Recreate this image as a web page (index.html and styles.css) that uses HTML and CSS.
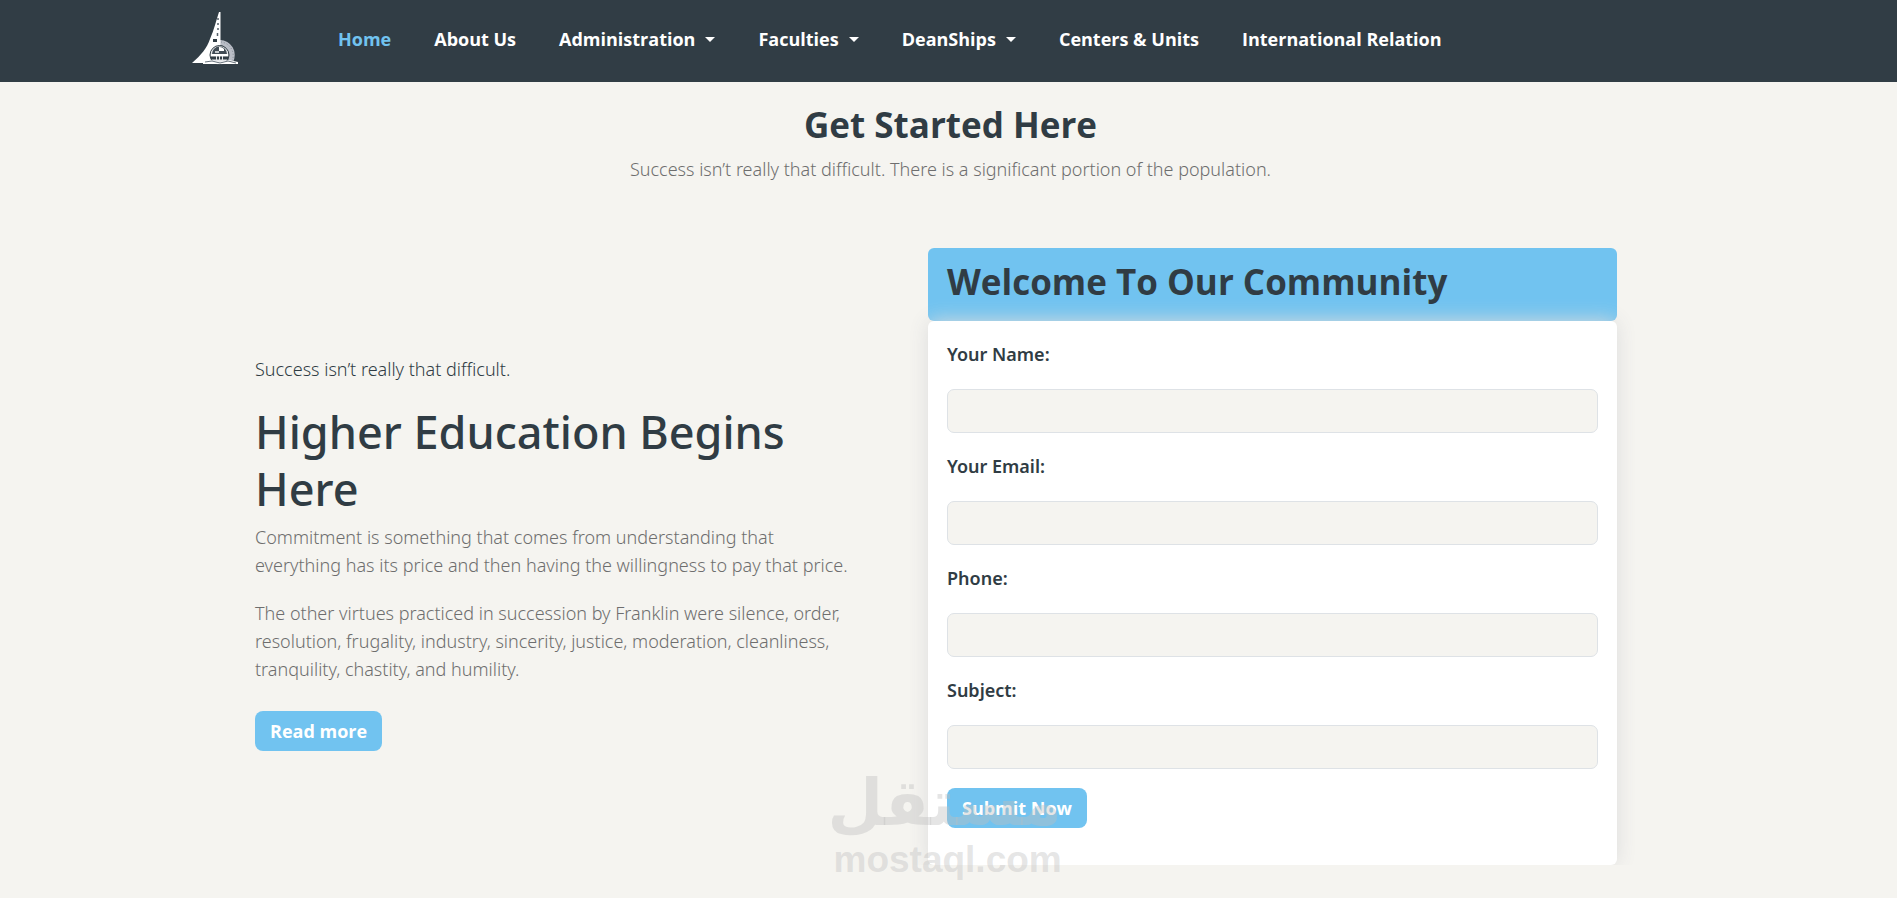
FILE: index.html
```html
<!DOCTYPE html>
<html lang="en">
<head>
  <meta charset="utf-8">
  <meta name="viewport" content="width=device-width, initial-scale=1">
  <title>Get Started Here</title>
  <link rel="stylesheet" href="styles.css">
</head>
<body>

  <nav class="navbar">
    <a class="brand" href="#" aria-label="University home">
      <svg width="47" height="54" viewBox="0 0 47 54">
        <!-- protractor -->
        <path d="M28 28a15 15 0 0 1 13 22h-6a11 11 0 0 0-7-17z" fill="#b9bdc6"/>
        <path d="M29 30a13.500 13.500 0 0 1 11 19" fill="none" stroke="#7d8790" stroke-width="1" stroke-dasharray="1 2"/>
        <!-- tower -->
        <path d="M27 0h1.500v30l-1 21H0C9 43 15 36 18 27C22 18 24 9 27 0z" fill="#fff"/>
        <path d="M26 6v2M26 11v2M26 16v2M25.500 21v3" stroke="#55606a" stroke-width="1.500"/>
        <path d="M21 27h4v3h-4z" fill="#313d45"/>
        <!-- dome and gate -->
        <circle cx="27.500" cy="43" r="9.500" fill="#e4e6e9" stroke="#313d45" stroke-width="1"/>
        <path d="M20 42a7.500 7.500 0 0 1 15 0z" fill="#414c55"/>
        <path d="M27 35v4h5v-2a6 6 0 0 0-5-2z" fill="#fff"/>
        <path d="M23 39h4v2h-4z" fill="#c3c8cd"/>
        <path d="M19 43h17" stroke="#fff" stroke-width="2"/>
        <path d="M19 46h5M25 46h2M28 46h2M31 46h5" stroke="#313d45" stroke-width="3"/>
        <path d="M11 50l8-2 9 2 9-2 9 2v2H11z" fill="#fff"/>
        <path d="M13 50l7-1 8 2 8-2 8 2" fill="none" stroke="#68737c" stroke-width="1"/>
      </svg>
    </a>
    <ul class="nav-links">
      <li><a class="active" href="#">Home</a></li>
      <li><a href="#">About Us</a></li>
      <li><a class="dropdown" href="#">Administration</a></li>
      <li><a class="dropdown" href="#">Faculties</a></li>
      <li><a class="dropdown" href="#">DeanShips</a></li>
      <li><a href="#">Centers &amp; Units</a></li>
      <li><a href="#">International Relation</a></li>
    </ul>
  </nav>

  <header class="section-title">
    <h2>Get Started Here</h2>
    <p>Success isn’t really that difficult. There is a significant portion of the population.</p>
  </header>

  <main class="started">
    <section class="intro">
      <p class="lead">Success isn’t really that difficult.</p>
      <h1>Higher Education Begins Here</h1>
      <p>Commitment is something that comes from understanding that everything has its price and then having the willingness to pay that price.</p>
      <p>The other virtues practiced in succession by Franklin were silence, order, resolution, frugality, industry, sincerity, justice, moderation, cleanliness, tranquility, chastity, and humility.</p>
      <button class="btn" type="button">Read more</button>
    </section>

    <section class="community">
      <h2>Welcome To Our Community</h2>
      <form class="card">
        <label for="name">Your Name:</label>
        <input id="name" type="text" name="name">
        <label for="email">Your Email:</label>
        <input id="email" type="email" name="email">
        <label for="phone">Phone:</label>
        <input id="phone" type="tel" name="phone">
        <label for="subject">Subject:</label>
        <input id="subject" type="text" name="subject">
        <button class="btn" type="submit">Submit Now</button>
      </form>
    </section>
  </main>

  <div class="watermark">
    <span class="watermark-ar" lang="ar" dir="rtl">مستقل</span>
    <span class="watermark-en">mostaql.com</span>
  </div>

</body>
</html>
```
FILE: styles.css
```css
* {
  box-sizing: border-box;
}
body {
  margin: 0;
  background: #f5f4f0;
  color: #303c44;
  font-family: "Noto Sans", sans-serif;
  font-size: 18px;
  line-height: 28px;
}
h1, h2, p, ul {
  margin: 0;
  padding: 0;
}
.navbar {
  display: flex;
  align-items: center;
  gap: 99px;
  min-height: 82px;
  padding: 0 192px;
  background: #313d45;
}
.brand {
  display: flex;
  padding-bottom: 4px;
}
.nav-links {
  display: flex;
  flex-wrap: wrap;
  gap: 43px;
  padding-bottom: 4px;
  list-style: none;
}
.nav-links a {
  color: #fff;
  font-family: "Open Sans", sans-serif;
  font-weight: 700;
  text-decoration: none;
}
.nav-links a.active {
  color: #71c3f0;
}
.dropdown::after {
  content: "";
  display: inline-block;
  margin-left: 10px;
  vertical-align: 4px;
  border-top: 5px solid;
  border-left: 5px solid transparent;
  border-right: 5px solid transparent;
}
.section-title {
  padding: 19px 0 65px 4px;
  text-align: center;
}
h2 {
  font-family: "Open Sans", sans-serif;
  font-size: 35px;
  line-height: 48px;
  font-weight: 700;
}
.section-title p,
.intro p {
  color: #6e6e6e;
  font-weight: 300;
}
.section-title p {
  margin-top: 6px;
}
.started {
  display: grid;
  grid-template-columns: 42fr 43fr;
  align-items: center;
  max-width: 1387px;
  margin: 0 auto;
  padding-right: 25px;
}
.intro {
  padding: 0 64px 8px 0;
}
.intro p {
  margin-bottom: 20px;
}
.intro .lead {
  color: #303c44;
}
.intro h1 {
  margin-bottom: 6px;
  font-size: 45px;
  line-height: 57px;
  font-weight: 500;
}
.intro .btn {
  margin-top: 28px;
}
.btn {
  display: block;
  height: 40px;
  padding: 0 15px;
  border: 0;
  border-radius: 8px;
  background: #71c3f0;
  color: #fff;
  font: inherit;
  font-family: "Open Sans", sans-serif;
  font-weight: 700;
}
.community h2 {
  padding: 10px 19px 15px;
  border-radius: 6px;
  background: #71c3f0;
}
.card {
  padding: 19px 19px 37px;
  border-radius: 6px;
  background: #fff;
  box-shadow: 0 0 20px #dcdcdc;
}
.card label {
  display: block;
  margin-bottom: 21px;
  font-weight: 600;
}
.card input {
  display: block;
  width: 100%;
  height: 44px;
  margin-bottom: 19px;
  padding: 0 12px;
  border: 1px solid #dee2e6;
  border-radius: 7px;
  background: #f5f4f0;
  font: inherit;
}
.watermark {
  position: absolute;
  top: 764px;
  left: 50%;
  width: 228px;
  margin-left: -115px;
  color: rgba(190, 190, 190, 0.4);
  font-weight: 700;
  text-align: center;
  pointer-events: none;
}
.watermark span {
  display: block;
}
.watermark-ar {
  font-family: "DejaVu Sans", sans-serif;
  font-size: 64px;
  line-height: 78px;
}
.watermark-en {
  font-family: "Liberation Sans", sans-serif;
  font-size: 37px;
  line-height: 36px;
}
```
